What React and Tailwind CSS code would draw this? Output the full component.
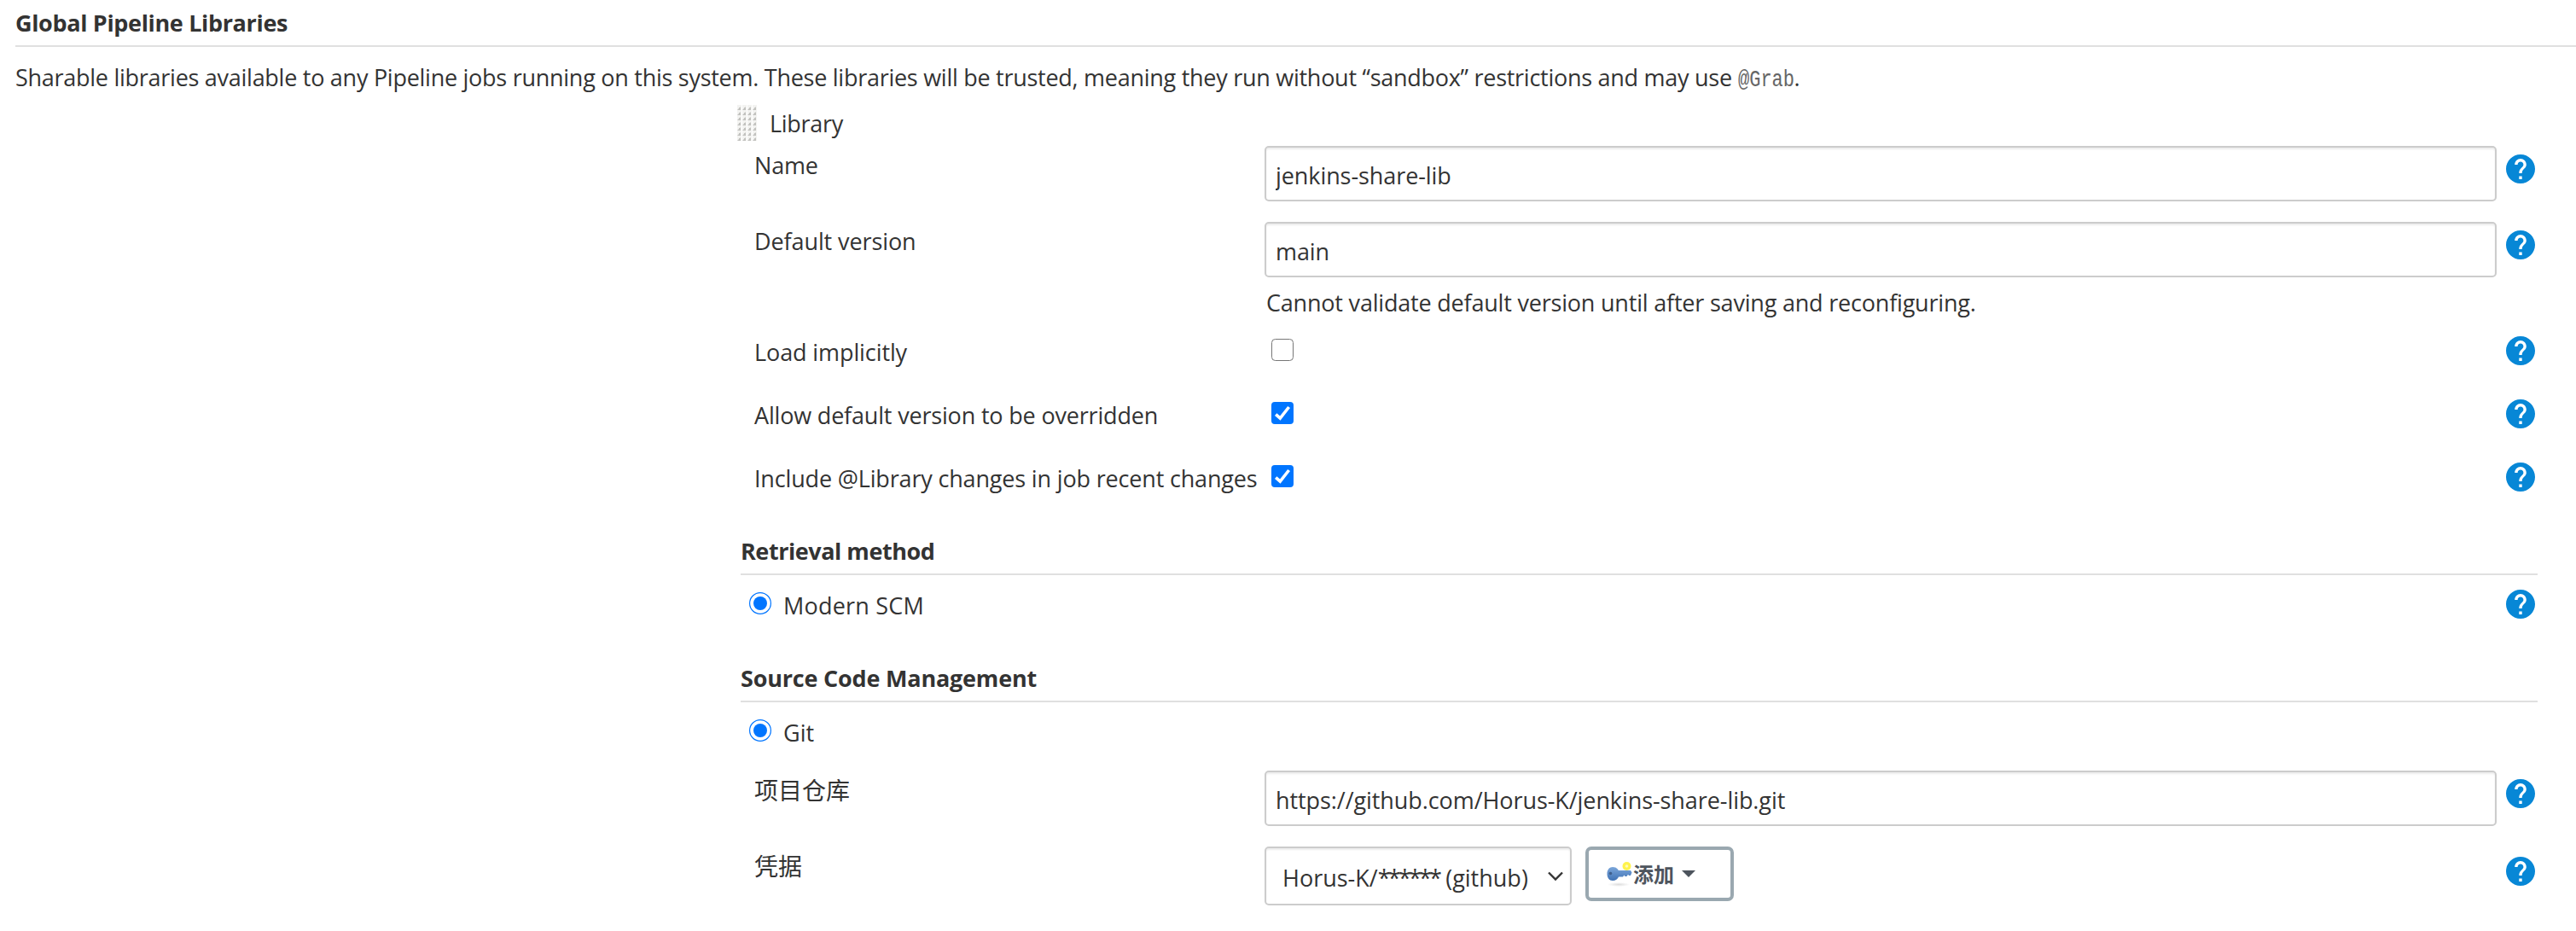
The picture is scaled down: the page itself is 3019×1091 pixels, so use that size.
import React from "react";

function HelpIcon() {
  return (
    <svg className="block h-[34px] w-[34px] shrink-0" viewBox="2 2 20 20" fill="#0787d6">
      <path d="M12 2C6.48 2 2 6.48 2 12s4.48 10 10 10 10-4.48 10-10S17.52 2 12 2zm1 17h-2v-2h2v2zm2.07-7.75l-.9.92C13.45 12.9 13 13.5 13 15h-2v-.5c0-1.1.45-2.1 1.17-2.83l1.24-1.26c.37-.36.59-.86.59-1.41 0-1.1-.9-2-2-2s-2 .9-2 2H8c0-2.21 1.79-4 4-4s4 1.79 4 4c0 .88-.36 1.68-.93 2.25z" />
    </svg>
  );
}

function DragHandle() {
  return (
    <svg className="mt-px block h-[42px] w-[23px] shrink-0" viewBox="0 0 23 42">
      <defs>
        <pattern id="grip" width="6" height="6" patternUnits="userSpaceOnUse">
          <rect x="0" y="0" width="5" height="6" fill="#f3f3f1" />
          <path d="M0 6 L4 2 V6 Z" fill="#c2c2bf" />
          <rect x="2" y="3" width="2" height="3" fill="#c2c2bf" />
        </pattern>
      </defs>
      <rect width="23" height="42" fill="url(#grip)" />
    </svg>
  );
}

function Checkbox({ checked }) {
  return (
    <svg role="checkbox" aria-checked={checked} className="block h-[26px] w-[26px]" viewBox="0 0 26 26">
      {checked ? (
        <>
          <rect width="26" height="26" rx="4" fill="#0075ff" />
          <path d="M5.2 14.6 L10.3 19.2 L20.6 6" fill="none" stroke="#fff" strokeWidth="3.6" />
        </>
      ) : (
        <rect x="0.5" y="0.5" width="25" height="25" rx="4" fill="#fff" stroke="#767676" />
      )}
    </svg>
  );
}

function Radio() {
  return (
    <svg role="radio" aria-checked="true" className="mt-[3px] block h-[26px] w-[26px] shrink-0" viewBox="0 0 26 26">
      <circle cx="13" cy="13" r="12.4" fill="#fff" stroke="#0075ff" strokeWidth="1.2" />
      <circle cx="13" cy="13" r="8" fill="#0075ff" />
    </svg>
  );
}

function KeyIcon() {
  return (
    <svg className="block h-8 w-8 shrink-0" viewBox="0 0 32 32">
      <defs>
        <linearGradient id="key" x1="0" y1="0" x2="0" y2="1">
          <stop offset="0" stopColor="#7ba6da" />
          <stop offset="1" stopColor="#3f72b4" />
        </linearGradient>
        <radialGradient id="shade">
          <stop offset="0" stopColor="#dcdcdc" />
          <stop offset="1" stopColor="#ffffff" />
        </radialGradient>
      </defs>
      <ellipse cx="15" cy="28.5" rx="13" ry="2.5" fill="url(#shade)" />
      <path d="M8 8c3.500 0 6 1.700 6.800 4H29l1.500 2.500-1.500 3.500h-2l-1-1.200-1.500 2.200h-2l-1-1.500-1.500 2H15c-1 2.700-3.600 4.500-7 4.500-4 0-6.500-3.500-6.500-8S4 8 8 8z" fill="url(#key)" />
      <circle cx="5.500" cy="15.500" r="1.800" fill="#3f5f8c" />
      <circle cx="24.500" cy="7" r="5" fill="#fff34d" />
      <circle cx="24.500" cy="7" r="1.800" fill="#fffbb8" />
    </svg>
  );
}

function TextField({ value }) {
  return (
    <input
      type="text"
      readOnly
      value={value}
      className="block h-[65px] w-full rounded-[5px] border-2 border-[#cccccc] bg-white pt-[4px] pl-[11px] tracking-[-0.08px] shadow-[inset_0_2px_2px_rgba(0,0,0,0.075)] outline-none"
    />
  );
}

function SettingRow({ label, labelClass = "", className = "", helpClass = "mt-[10px]", children }) {
  return (
    <div className={`flex items-start ${className}`}>
      <div className={`w-[598px] shrink-0 pl-[20px] whitespace-nowrap ${labelClass}`}>{label}</div>
      <div className="ml-[20px] w-[1444px] shrink-0">{children}</div>
      <div className={`ml-[11px] ${helpClass}`}><HelpIcon /></div>
    </div>
  );
}

function SectionHeading({ children, className = "" }) {
  return (
    <h3 className={`ml-[4px] w-[2106px] border-b-2 border-[#e0e0e0] font-bold ${className}`}>{children}</h3>
  );
}

function RadioRow({ children, help, className = "" }) {
  return (
    <div className={`flex items-start pl-[14px] ${className}`}>
      <Radio />
      <span className="mt-px ml-[14px] grow whitespace-nowrap">{children}</span>
      {help && <div className="mr-[3px]"><HelpIcon /></div>}
    </div>
  );
}

export default function App() {
  return (
    <div className="h-[1091px] w-[3019px] overflow-hidden bg-white pl-[18px] font-['Open_Sans','Noto_Sans_CJK_SC',sans-serif] text-[27px] leading-[36px] text-[#333333]">
      <h2 className="h-[55px] border-b-2 border-[#e0e0e0] pt-[9px] font-bold tracking-[-0.34px]">Global Pipeline Libraries</h2>
      <p className="mt-[18px] h-[49px] whitespace-nowrap tracking-[-0.27px]">
        Sharable libraries available to any Pipeline jobs running on this system. These libraries will be trusted, meaning they run without “sandbox” restrictions and may use{" "}
        <code className="mr-[-15px] inline-block origin-left scale-x-[0.815] font-['Liberation_Mono',monospace] text-[27px] leading-none tracking-normal text-[#666666]">@Grab</code>.
      </p>

      <div className="ml-[846px] w-[2110px]">
        <div className="flex h-[49px] items-start">
          <DragHandle />
          <span className="mt-[5px] ml-[15px] tracking-[-0.3px]">Library</span>
        </div>

        <SettingRow label="Name" labelClass="pt-[5px] tracking-[-0.2px]" className="h-[89px]">
          <TextField value="jenkins-share-lib" />
        </SettingRow>
        <SettingRow label="Default version" labelClass="pt-[5px] tracking-[-0.1px]" className="h-[134px]">
          <TextField value="main" />
          <div className="pt-[12px] pl-[2px] tracking-[-0.2px]">Cannot validate default version until after saving and reconfiguring.</div>
        </SettingRow>

        <SettingRow label="Load implicitly" labelClass="pt-px tracking-[-0.1px]" className="h-[74px]" helpClass="">
          <div className="pt-[3px] pl-[8px]"><Checkbox checked={false} /></div>
        </SettingRow>
        <SettingRow label="Allow default version to be overridden" labelClass="pt-px tracking-[-0.18px]" className="h-[74px]" helpClass="">
          <div className="pt-[3px] pl-[8px]"><Checkbox checked /></div>
        </SettingRow>
        <SettingRow label="Include @Library changes in job recent changes" labelClass="pt-px tracking-[-0.17px]" className="h-[74px]" helpClass="">
          <div className="pt-[3px] pl-[8px]"><Checkbox checked /></div>
        </SettingRow>

        <SectionHeading className="h-[58px] pt-[12px] tracking-[-0.45px]">Retrieval method</SectionHeading>
        <RadioRow className="h-[85px] pt-[17px]" help><span className="tracking-[0.2px]">Modern SCM</span></RadioRow>

        <SectionHeading className="h-[64px] pt-[18px] tracking-[-0.2px]">Source Code Management</SectionHeading>
        <RadioRow className="h-[80px] pt-[17px]">Git</RadioRow>

        <SettingRow label="项目仓库" labelClass="pt-[5px] text-[28px]" className="h-[89px]">
          <TextField value="https://github.com/Horus-K/jenkins-share-lib.git" />
        </SettingRow>
        <SettingRow label="凭据" labelClass="pt-[5px] text-[28px]" className="h-[89px]" helpClass="mt-[12px]">
          <div className="flex items-start gap-[16px]">
            <button className="flex h-[69px] w-[360px] items-center rounded-[5px] border-2 border-[#cccccc] bg-white pt-[4px] pl-[19px] whitespace-nowrap shadow-[inset_0_2px_2px_rgba(0,0,0,0.075)]">
              <span>Horus-K/<span className="tracking-[-2.8px]">******</span> (github)</span>
              <svg className="mr-[8px] mb-[4px] ml-auto block h-[12px] w-[18px]" viewBox="0 0 18 12">
                <path d="M1 1.500 L9 9.500 L17 1.500" fill="none" stroke="#333333" strokeWidth="2.400" />
              </svg>
            </button>
            <button className="flex h-[64px] w-[174px] items-center rounded-[7px] border-4 border-[#9aa8b0] bg-white pl-[20px] text-[24px] font-bold text-[#4d545d]">
              <KeyIcon />
              <span className="pt-[2px]">添加</span>
              <svg className="ml-[9px] block h-[8px] w-[16px]" viewBox="0 0 16 8">
                <path d="M0 0 H16 L8 8 Z" fill="#4d545d" />
              </svg>
            </button>
          </div>
        </SettingRow>
      </div>
    </div>
  );
}
